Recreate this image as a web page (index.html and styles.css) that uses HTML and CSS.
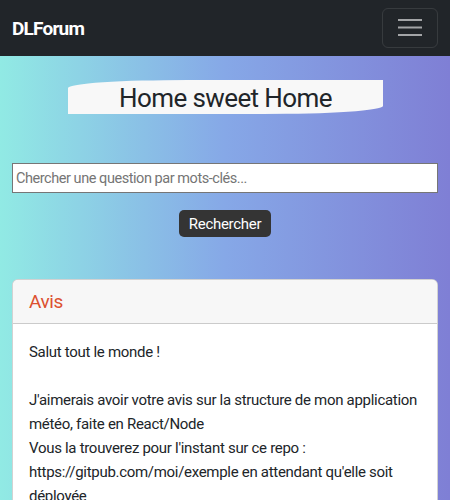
FILE: index.html
```html
<!DOCTYPE html>
<html lang="fr">
<head>
<meta charset="utf-8">
<title>DLForum</title>
<link rel="stylesheet" href="styles.css">
</head>
<body>
<nav class="navbar">
  <a class="brand" href="#">DLForum</a>
  <button class="toggler" type="button" aria-label="Menu">
    <svg width="24" height="18" viewBox="0 0 24 18"><path d="M0 1h24M0 8.5h24M0 16h24" stroke="#a3a5a7" stroke-width="2"/></svg>
  </button>
</nav>
<main class="page">
  <div class="hero">
    <h1 class="title">Home sweet Home</h1>
  </div>
  <form class="search">
    <input class="search-input" type="text" placeholder="Chercher une question par mots-clés...">
    <button class="search-btn" type="button">Rechercher</button>
  </form>
  <section class="card">
    <header class="card-header">Avis</header>
    <div class="card-body">
      <p>Salut tout le monde !</p>
      <p class="gap"></p>
      <p>J'aimerais avoir votre avis sur la structure de mon application météo, faite en React/Node</p>
      <p>Vous la trouverez pour l'instant sur ce repo :</p>
      <p>https://gitpub.com/moi/exemple en attendant qu'elle soit déployée</p>
    </div>
  </section>
</main>
</body>
</html>
```

FILE: styles.css
```css
* { box-sizing: border-box; }
html, body { margin: 0; height: 100%; }
body {
  font-family: Roboto, "Noto Sans", sans-serif;
  color: #212529;
  background: linear-gradient(to right, #91eae4, #86a8e7, #7f7fd5);
  overflow: hidden;
}
.navbar {
  height: 56px;
  background: #212529;
  display: flex;
  align-items: center;
  justify-content: space-between;
  padding: 0 12px;
}
.brand {
  color: #fff;
  font-weight: 700;
  font-size: 19px;
  letter-spacing: -0.8px;
  text-decoration: none;
}
.toggler {
  width: 56px;
  height: 40px;
  margin-top: -1px;
  background: transparent;
  border: 1px solid rgba(255,255,255,0.1);
  border-radius: 6px;
  display: flex;
  align-items: center;
  justify-content: center;
  padding: 0;
}
.page { padding: 0 12px; }
.hero {
  display: flex;
  justify-content: center;
  padding-top: 24px;
}
.title {
  margin: 0 0 0 1px;
  width: 315px;
  height: 34px;
  background: #f8f8f8;
  border-top-left-radius: 120px 8px;
  border-bottom-right-radius: 120px 8px;
  font-weight: 400;
  font-size: 26px;
  letter-spacing: -0.6px;
  line-height: 36px;
  text-align: center;
  color: #212529;
}
.search {
  margin-top: 49px;
  display: flex;
  flex-direction: column;
  align-items: center;
}
.search-input {
  width: 100%;
  height: 30px;
  border: 1px solid #767676;
  background: #fff;
  font-family: inherit;
  font-size: 14.5px;
  letter-spacing: -0.45px;
  padding: 0 3px;
  color: #212529;
}
.search-input::placeholder { color: #757575; }
.search-btn {
  margin-top: 17px;
  height: 27px;
  padding: 0 10px;
  border: 0;
  border-radius: 5px;
  background: #343434;
  color: #fff;
  font-family: inherit;
  font-size: 15px;
  letter-spacing: -0.3px;
}
.card {
  margin-top: 42px;
  background: #fff;
  border: 1px solid rgba(0,0,0,0.175);
  border-radius: 6px;
  overflow: hidden;
}
.card-header {
  height: 44px;
  padding: 0 16px;
  display: flex;
  align-items: center;
  background: #f7f7f7;
  border-bottom: 1px solid rgba(0,0,0,0.175);
  color: #dc5030;
  font-size: 19px;
  letter-spacing: -0.4px;
}
.card-body {
  padding: 16px 16px;
  font-size: 15px;
  line-height: 24px;
  letter-spacing: -0.3px;
}
.card-body p { margin: 0; }
.card-body .gap { height: 24px; }
```
